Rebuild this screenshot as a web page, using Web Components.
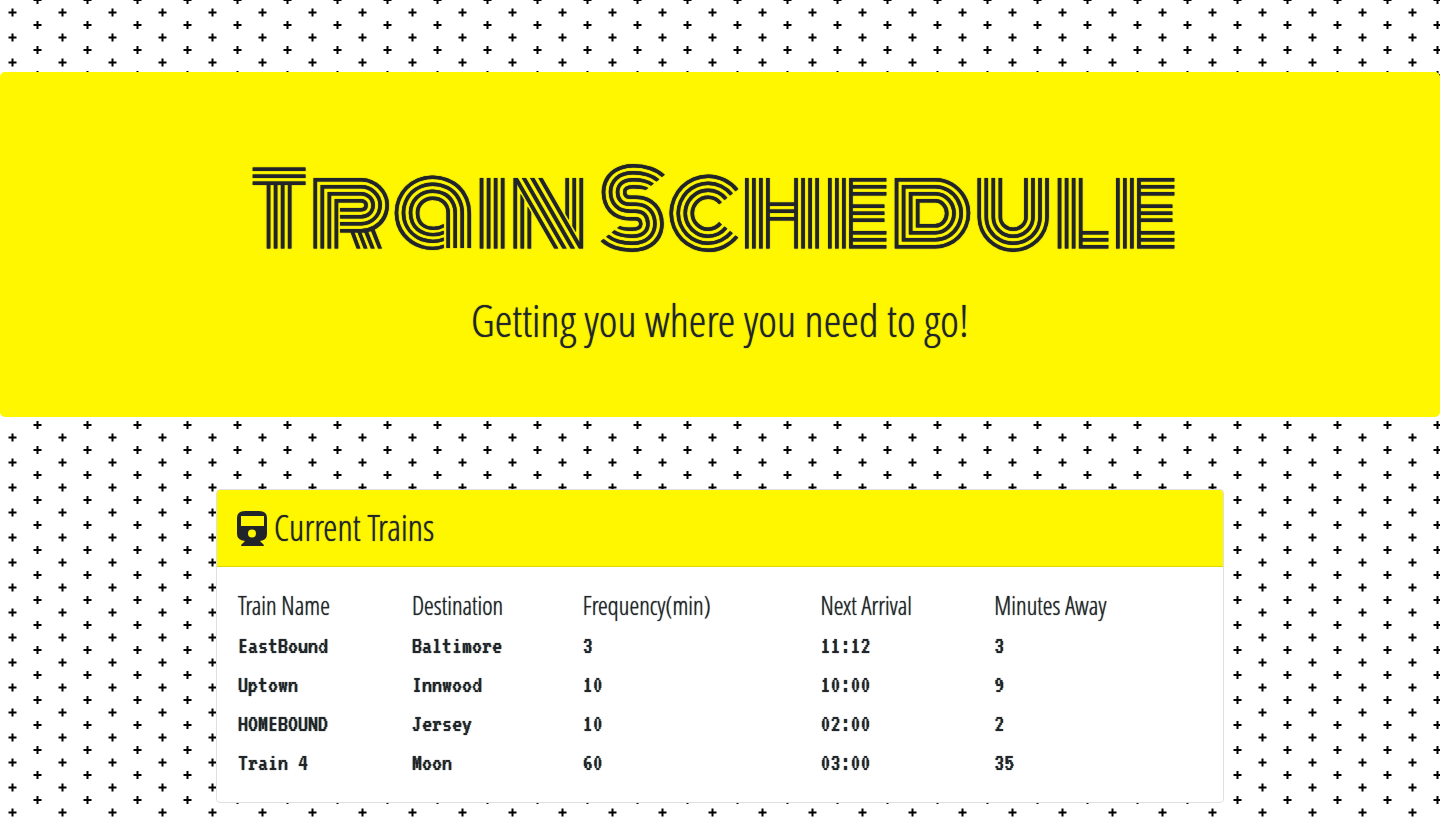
<!DOCTYPE html>
<html lang="en">
<head>
<meta charset="utf-8">
<meta name="viewport" content="width=device-width, initial-scale=1">
<title>Train Schedule</title>
<style>
  :root {
    --yellow: #fff700;
    --ink: #212529;
    --narrow: "Open Sans Condensed Light", "Open Sans Condensed", "Liberation Sans Narrow", "Open Sans", sans-serif;
    --mono: VT323, "Liberation Mono", monospace;
  }
  body {
    margin: 0;
    color: var(--ink);
    font-family: var(--narrow);
    text-shadow: 0 0 1px var(--ink);
    background: #fff url("data:image/svg+xml,%3Csvg xmlns='http://www.w3.org/2000/svg' width='50' height='25'%3E%3Cpath d='M8.5 12.5h8M12.5 8.5v8M33.5 0h8M37.5 0v4M33.5 25h8M37.5 21v4' stroke='%23000' stroke-width='2' fill='none'/%3E%3C/svg%3E");
  }
</style>
</head>
<body>
<train-page>
  <page-banner>
    <span slot="title">Train Schedule</span>
    Getting you where you need to go!
  </page-banner>
  <info-card>
    <train-icon slot="icon"></train-icon>
    <span slot="title">Current Trains</span>
    <train-table></train-table>
  </info-card>
</train-page>

<script>
function define(name, html, setup) {
  const template = document.createElement('template');
  template.innerHTML = html;
  customElements.define(name, class extends HTMLElement {
    constructor() {
      super();
      this.attachShadow({ mode: 'open' }).append(template.content.cloneNode(true));
      if (setup) setup(this.shadowRoot);
    }
  });
}

define('train-page', `
  <style>
    :host { display: flex; flex-direction: column; gap: 72px; padding: 72px 0 16px; }
  </style>
  <slot></slot>`);

define('page-banner', `
  <style>
    :host { display: block; box-sizing: border-box; padding: 64px 32px; background: var(--yellow); border-radius: 5px; text-align: center; }
    h1 { margin: 0 0 2px; padding-right: 12px; font-family: Monoton, "Open Sans", sans-serif; font-size: 100px; line-height: 148px; font-weight: 400; }
    p { margin: 0; font-size: 45px; line-height: 67px; font-weight: 300; }
  </style>
  <h1><slot name="title"></slot></h1>
  <p><slot></slot></p>`);

define('train-icon', `
  <style>
    :host { display: block; }
    svg { display: block; width: 30px; height: 35px; }
  </style>
  <svg viewBox="0 0 30 35" fill="#212529" fill-rule="evenodd" aria-hidden="true">
    <path d="M8 0h14q8 0 8 7v16q0 6-7 7l3.500 3.500q1 1.500-.5 1.500H5q-1.500 0-.5-1.500L8 30q-8-1-8-7V7q0-7 8-7ZM4 5v10h23V5ZM15 18.500a4 4 0 1 0 0 8a4 4 0 1 0 0-8Z"/>
  </svg>`);

define('info-card', `
  <style>
    :host { display: block; box-sizing: border-box; width: 70%; margin: 0 auto; background: #fff; border: 1px solid #dfdfdf; border-radius: 4px; }
    header { display: flex; align-items: center; gap: 7px; padding: 12px 20px; background: var(--yellow); border-bottom: 1px solid #dfd800; border-radius: 3px 3px 0 0; }
    h2 { margin: 0; font-size: 36px; line-height: 52px; font-weight: 300; }
    section { padding: 20px; }
  </style>
  <header><slot name="icon"></slot><h2><slot name="title"></slot></h2></header>
  <section><slot></slot></section>`);

define('train-table', `
  <style>
    :host { display: block; }
    table { width: 100%; table-layout: fixed; border-collapse: collapse; text-align: left; }
    th, td { height: 39px; box-sizing: border-box; padding: 0 1px; vertical-align: middle; white-space: nowrap; }
    th { font-size: 25px; line-height: 36px; font-weight: 300; vertical-align: top; }
    td { font-family: var(--mono); font-size: 25px; line-height: 25px; font-weight: 400; }
  </style>
  <table>
    <colgroup><col style="width:18%"><col style="width:17.7%"><col style="width:24.600%"><col style="width:18%"><col></colgroup>
    <thead><tr><th>Train Name</th><th>Destination</th><th>Frequency(min)</th><th>Next Arrival</th><th>Minutes Away</th></tr></thead>
    <tbody></tbody>
  </table>`, root => {
  const trains = [
    ['EastBound', 'Baltimore', '3', '11:12', '3'],
    ['Uptown', 'Innwood', '10', '10:00', '9'],
    ['HOMEBOUND', 'Jersey', '10', '02:00', '2'],
    ['Train 4', 'Moon', '60', '03:00', '35']
  ];
  const body = root.querySelector('tbody');
  for (const train of trains) {
    const row = body.insertRow();
    for (const value of train) row.insertCell().textContent = value;
  }
});
</script>
</body>
</html>
